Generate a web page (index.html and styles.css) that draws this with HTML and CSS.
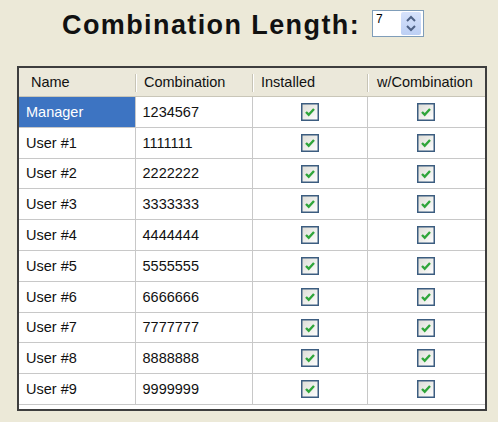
FILE: index.html
```html
<!DOCTYPE html>
<html>
<head>
<meta charset="utf-8">
<link rel="stylesheet" href="styles.css">
</head>
<body>
<div class="title-row">
  <h1 class="title">Combination Length:</h1>
  <div class="spinner">
    <span class="spin-value">7</span>
    <div class="spin-buttons">
      <svg width="20" height="23" viewBox="0 0 20 23">
        <path d="M6 9 L10 5 L14 9" fill="none" stroke="#4d6185" stroke-width="2"/>
        <path d="M6 14 L10 18 L14 14" fill="none" stroke="#4d6185" stroke-width="2"/>
      </svg>
    </div>
  </div>
</div>
<div class="grid-frame">
  <table class="grid">
    <colgroup>
      <col class="c-name"><col class="c-comb"><col class="c-inst"><col class="c-wc">
    </colgroup>
    <thead>
      <tr>
        <th class="h-name">Name</th>
        <th class="h-comb">Combination</th>
        <th class="h-inst">Installed</th>
        <th class="h-wc">w/Combination</th>
      </tr>
    </thead>
    <tbody id="rows"></tbody>
  </table>
</div>
<script src="app.js"></script>
</body>
</html>
```
FILE: app.js
```js
var data = [
  ["Manager", "1234567"],
  ["User #1", "1111111"],
  ["User #2", "2222222"],
  ["User #3", "3333333"],
  ["User #4", "4444444"],
  ["User #5", "5555555"],
  ["User #6", "6666666"],
  ["User #7", "7777777"],
  ["User #8", "8888888"],
  ["User #9", "9999999"]
];
var box = '<span class="check"><svg width="18" height="18" viewBox="0 0 18 18">' +
  '<defs><linearGradient id="g" x1="0" y1="0" x2="1" y2="1"><stop offset="0" stop-color="#dcdcd5"/><stop offset="1" stop-color="#ffffff"/></linearGradient></defs>' +
  '<rect x="0.75" y="0.75" width="16.5" height="16.5" fill="url(#g)" stroke="#3c5d80" stroke-width="1.5"/>' +
  '<path d="M5 9 L7.7 11.7 L13 6" fill="none" stroke="#2fa53a" stroke-width="2.4"/>' +
  '</svg></span>';
var tb = document.getElementById("rows");
var html = "";
data.forEach(function (r, i) {
  html += '<tr><td class="name' + (i === 0 ? ' selected' : '') + '">' + r[0] + '</td>' +
    '<td class="comb">' + r[1] + '</td>' +
    '<td class="box">' + box + '</td>' +
    '<td class="box">' + box + '</td></tr>';
});
tb.innerHTML = html;
```
FILE: styles.css
```css
html, body {
  margin: 0;
  padding: 0;
}
body {
  background: #ece9d8;
  width: 498px;
  height: 422px;
  overflow: hidden;
  font-family: "Liberation Sans", Arial, sans-serif;
}
.title-row {
  display: flex;
  align-items: center;
  padding-left: 62px;
  padding-top: 9px;
  height: 28px;
}
.title {
  margin: 0;
  font-size: 27px;
  font-weight: bold;
  letter-spacing: 1.4px;
  color: #111;
  line-height: 28px;
  margin-top: 3px;
}
.spinner {
  margin-left: 12px;
  width: 50px;
  height: 25px;
  border: 1px solid #7f9db9;
  background: #fff;
  display: flex;
  justify-content: space-between;
  align-items: stretch;
  box-sizing: content-box;
}
.spin-value {
  font-size: 12px;
  padding-left: 3px;
  line-height: 16px;
  color: #000;
}
.spin-buttons {
  width: 20px;
  margin: 1px 2px 1px 0;
  background: linear-gradient(#d6e2fb, #bccff4);
  border-radius: 2px;
  display: flex;
  align-items: center;
}
.spin-buttons svg { display: block; }
.grid-frame {
  margin: 29px 0 0 17px;
  width: 466px;
  height: 341px;
  border: 2px solid #3e3e3e;
  background: #fff;
}
.grid {
  border-collapse: collapse;
  table-layout: fixed;
  width: 466px;
  font-size: 14.5px;
  color: #111;
}
.c-name { width: 116px; }
.c-comb { width: 117px; }
.c-inst { width: 115px; }
.c-wc { width: 118px; }
.grid th {
  background: #ebe8da;
  font-weight: normal;
  text-align: left;
  height: 28px;
  padding: 0;
  border-bottom: 1px solid #c9c6b8;
  position: relative;
}
.grid th + th::before {
  content: "";
  position: absolute;
  left: 0;
  top: 6px;
  height: 18px;
  width: 1px;
  background: #c7c4b6;
  box-shadow: 1px 0 0 #fff;
}
.h-name { padding-left: 12px !important; }
.h-comb { padding-left: 9px !important; }
.h-inst { padding-left: 9px !important; }
.h-wc { padding-left: 10px !important; }
.grid td {
  height: 29.8px;
  padding: 0;
  border-bottom: 1px solid #c8c8c8;
  border-right: 1px solid #c8c8c8;
}
.grid td:last-child { border-right: none; }
.grid td.name { padding-left: 7px; }
.grid td.comb { padding-left: 7px; }
.grid td.selected {
  background: #3d74c2;
  color: #fff;
}
.grid td.box { text-align: center; }
.check {
  display: inline-block;
  vertical-align: middle;
  line-height: 0;
}
```
